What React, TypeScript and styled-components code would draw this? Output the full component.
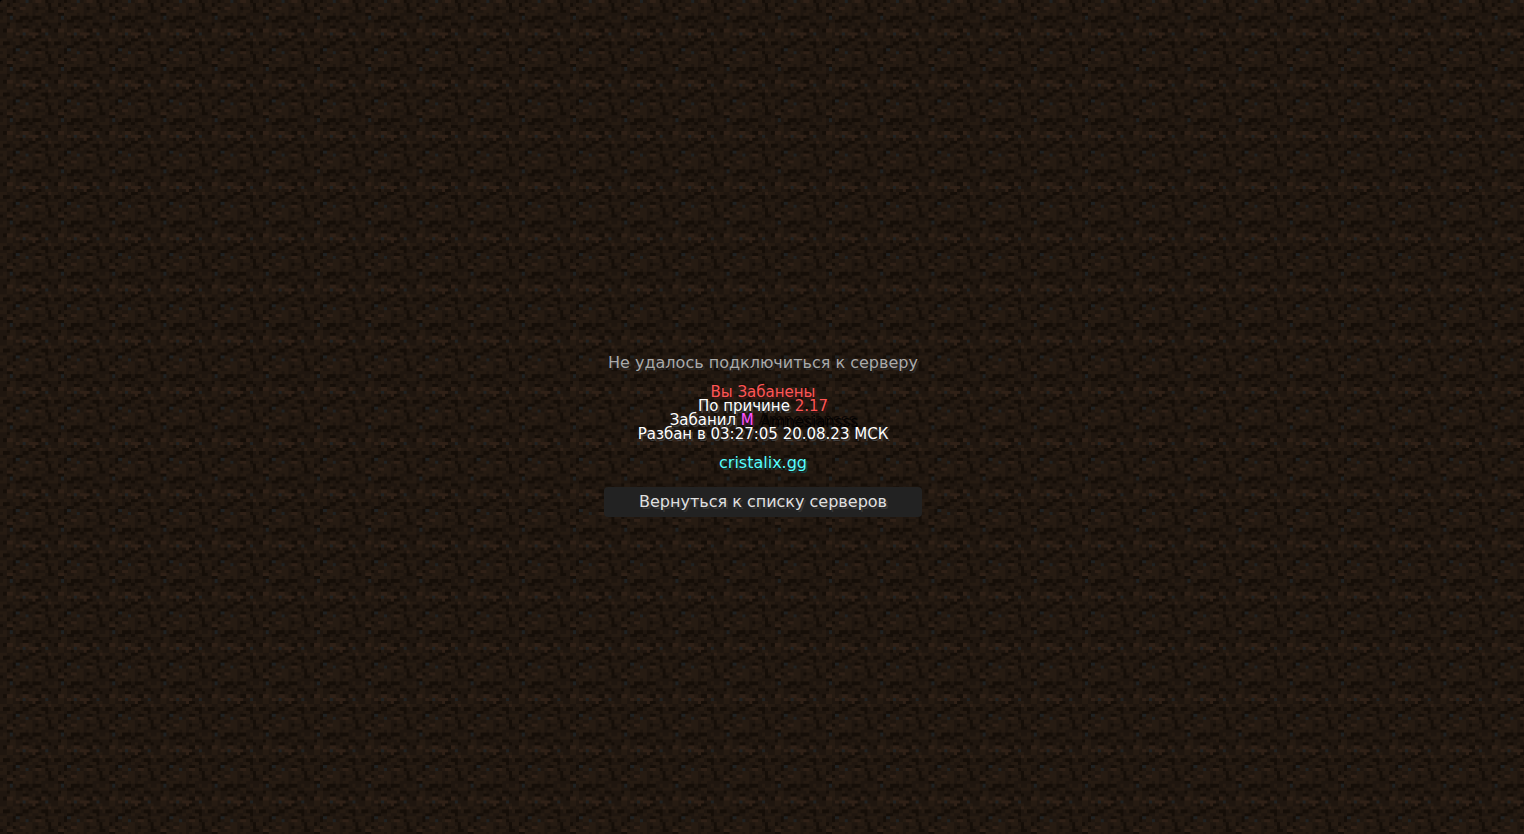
import React from "react";
import styled, { createGlobalStyle } from "styled-components";

const GlobalStyle = createGlobalStyle`
  html, body { margin: 0; background: #000; }
`;

/* 16x16 dirt texture: a = light, b = mid, c = base, d = dark, g = pebble */
const TEXTURE = [
  "cbccdcbbgcbaabdc",
  "bbdcbbccbbccbbcd",
  "ccbbdcaabbcdccbd",
  "dcaabccbbbccbbcd",
  "ccddbbbbcbcbbccc",
  "cbcgcbdddcdddcbc",
  "bbcccddccdcbbccb",
  "ccdbbccbccccbddc",
  "cccbbccddcbccccd",
  "cdaabcbaabcddabc",
  "ccbbcabgbaaaccgc",
  "ccbbccdbccaddcbb",
  "bbccbbccbddcbbca",
  "bddccbcddcbbcddc",
  "ccbbcddccbccbbdc",
  "bbccdgbbcccddccb",
];

const SHADES: Record<string, string> = {
  a: "#302117",
  b: "#261b12",
  c: "#1f160f",
  d: "#150e08",
  g: "#1f2223",
};

const TEXEL = 3.2;

const Page = styled.main`
  position: relative;
  box-sizing: border-box;
  display: flex;
  flex-direction: column;
  align-items: center;
  justify-content: center;
  min-height: 100vh;
  padding: 38px 0 0 2px;
  overflow: hidden;
  border-top-left-radius: 4px;
  background: #1f160f;
  font-family: "DejaVu Sans", sans-serif;
  font-size: 16px;
  line-height: 14px;
  text-align: center;
`;

const Backdrop = styled.svg`
  position: absolute;
  inset: 0;
  width: 100%;
  height: 100%;
`;

const Screen = styled.section`
  position: relative;
  display: flex;
  flex-direction: column;
  align-items: center;
`;

const Title = styled.h1`
  margin: 0 0 15px;
  font-size: inherit;
  font-weight: 400;
  color: #aaa;
  text-shadow: 2px 2px 0 #2a2a2a;
`;

const Message = styled.p`
  margin: 0 0 15px;
  font-size: 15px;
`;

const Line = styled.span`
  display: block;
  color: #fff;
  text-shadow: 2px 2px 0 #3f3f3f;
`;

const Tint = styled.span<{ $color: string; $shadow: string }>`
  color: ${(p) => p.$color};
  text-shadow: 2px 2px 0 ${(p) => p.$shadow};
`;

const SiteLink = styled.a`
  margin-bottom: 17px;
  color: #55ffff;
  text-decoration: none;
  text-shadow: 2px 2px 0 #153f3f;
`;

const BackButton = styled.button`
  width: 318px;
  max-width: 100%;
  height: 30px;
  padding: 0;
  border: 0;
  border-radius: 4px;
  background: #222;
  color: #e0e0e0;
  font: inherit;
  text-shadow: 2px 2px 0 #383838;
  cursor: pointer;
`;

function Dirt() {
  const size = TEXEL * 16;
  return (
    <Backdrop aria-hidden="true" shapeRendering="crispEdges">
      <defs>
        <pattern id="dirt" width={size} height={size} patternUnits="userSpaceOnUse">
          {TEXTURE.map((row, y) =>
            row.split("").map((shade, x) => (
              <rect
                key={`${x}-${y}`}
                x={x * TEXEL}
                y={y * TEXEL}
                width={TEXEL}
                height={TEXEL}
                fill={SHADES[shade]}
              />
            ))
          )}
        </pattern>
      </defs>
      <rect width="100%" height="100%" fill="url(#dirt)" />
    </Backdrop>
  );
}

export default function App() {
  return (
    <>
      <GlobalStyle />
      <Page>
        <Dirt />
        <Screen>
          <Title>Не удалось подключиться к серверу</Title>
          <Message>
            <Line>
              <Tint $color="#ff5555" $shadow="#3f1515">Вы Забанены</Tint>
            </Line>
            <Line>
              По причине <Tint $color="#ff5555" $shadow="#3f1515">2.17</Tint>
            </Line>
            <Line>
              Забанил <Tint $color="#ff55ff" $shadow="#3f153f">M</Tint>{" "}
              <Tint $color="#0a0504" $shadow="#000">Amnesiansss</Tint>
            </Line>
            <Line>Разбан в 03:27:05 20.08.23 МСК</Line>
          </Message>
          <SiteLink href="https://cristalix.gg">cristalix.gg</SiteLink>
          <BackButton type="button">Вернуться к списку серверов</BackButton>
        </Screen>
      </Page>
    </>
  );
}
